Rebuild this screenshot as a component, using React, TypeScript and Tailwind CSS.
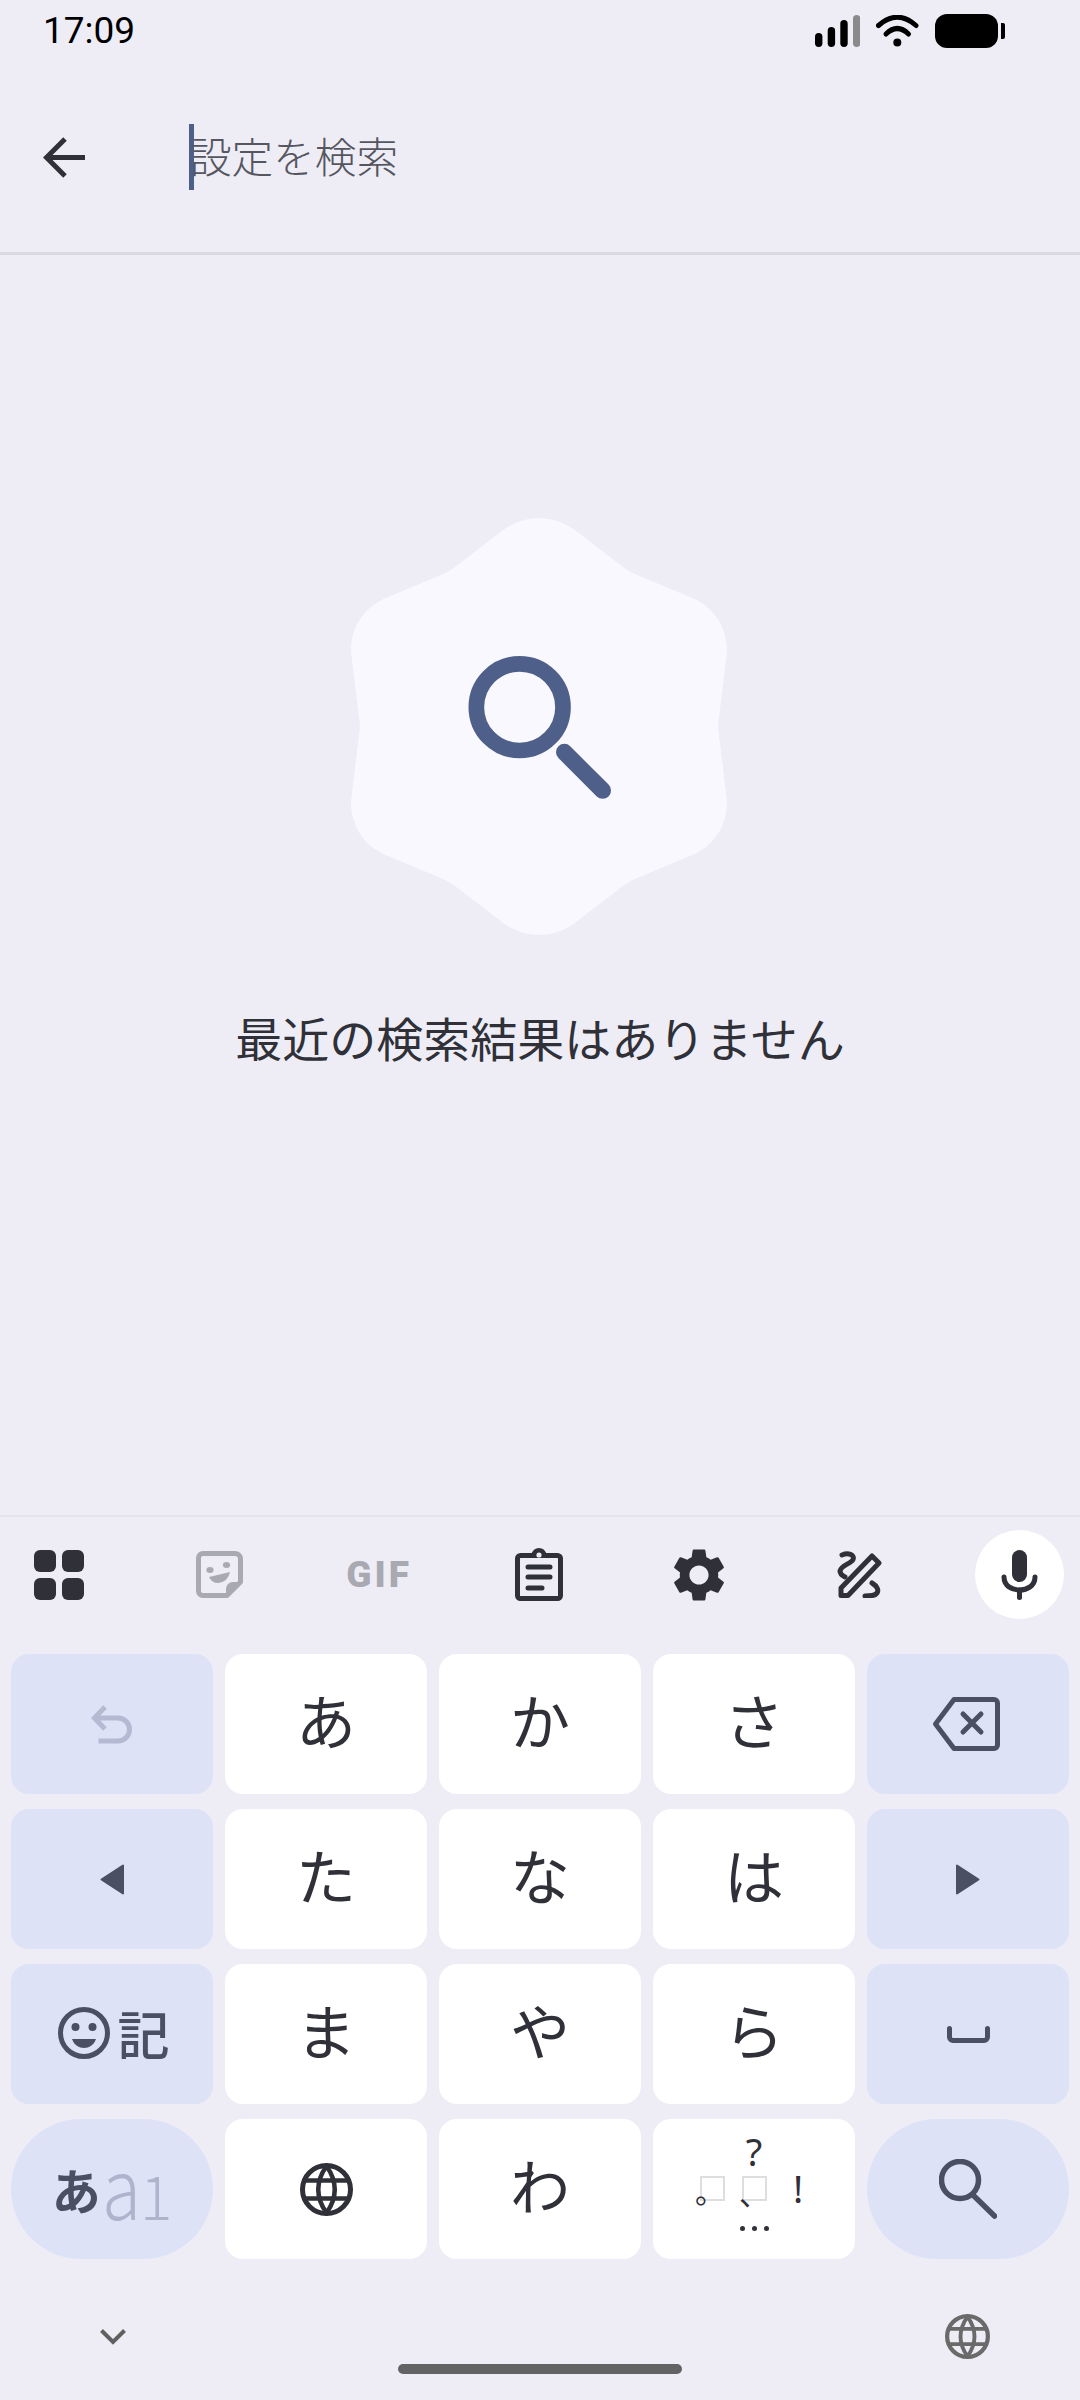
import type { ReactNode } from "react";

const cjk = "font-['Noto_Sans_CJK_JP','Noto_Sans',sans-serif]";

function Signal() {
  return (
    <svg width="45" height="32" viewBox="0 0 45 32">
      <rect x="0" y="18" width="7.4" height="14" rx="3.7" fill="#000" />
      <rect x="12.7" y="12" width="7.4" height="20" rx="3.7" fill="#000" />
      <rect x="25.3" y="5" width="7.4" height="27" rx="3.7" fill="#000" />
      <rect x="38" y="0" width="7.4" height="32" rx="3.7" fill="#8a8a8a" />
    </svg>
  );
}

function Wifi() {
  return (
    <svg width="43" height="32" viewBox="0 0 43 32" fill="none" stroke="#000" strokeWidth="5" strokeLinecap="round">
      <path d="M2.5 10.5Q21.3 -6 40 10.5" />
      <path d="M10 19Q21.3 8 32.5 19" />
      <circle cx="21.3" cy="27.5" r="4" fill="#000" stroke="none" />
    </svg>
  );
}

function Battery() {
  return (
    <svg width="70" height="34" viewBox="0 0 70 34">
      <rect x="0" y="0" width="63" height="34" rx="12" fill="#000" />
      <path d="M66 9h2a2 2 0 0 1 2 2v12a2 2 0 0 1-2 2h-2z" fill="#000" />
    </svg>
  );
}

function BackArrow() {
  return (
    <svg width="42" height="41" viewBox="0 0 42 41" fill="none" stroke="#2f3038" strokeWidth="5">
      <path d="M42 20.5H4" />
      <path d="M22 2L3.5 20.5L22 39" />
    </svg>
  );
}

function EmptyBadge() {
  return (
    <svg width="376" height="417" viewBox="92 85 1128 1250">
      <path
        fill="#faf8ff"
        d="M656 85C695 85 730 97 762 120L895 222C910 234 925 245 945 253L1110 322C1180 350 1220 410 1220 485L1195 690Q1192 710 1195 730L1220 935C1220 1010 1180 1070 1110 1098L945 1167C925 1175 910 1186 895 1198L762 1300C730 1323 695 1335 656 1335C617 1335 582 1323 550 1300L417 1198C402 1186 387 1175 367 1167L202 1098C132 1070 92 1010 92 935L117 730Q120 710 117 690L92 485C92 410 132 350 202 322L367 253C387 245 402 234 417 222L550 120C582 97 617 85 656 85Z"
      />
      <circle cx="598" cy="652" r="130" fill="none" stroke="#4e6089" strokeWidth="47" />
      <path d="M732 787L847 902" stroke="#4e6089" strokeWidth="50" strokeLinecap="round" />
    </svg>
  );
}

function GridIcon() {
  return (
    <svg width="50" height="50" viewBox="0 0 50 50" fill="#2f3038">
      <rect x="0" y="0" width="22" height="22" rx="6" />
      <rect x="28" y="0" width="22" height="22" rx="6" />
      <rect x="0" y="28" width="22" height="22" rx="6" />
      <rect x="28" y="28" width="22" height="22" rx="6" />
    </svg>
  );
}

function StickerIcon() {
  return (
    <svg width="47" height="47" viewBox="0 0 47 47" fill="none">
      <path d="M7 2.5H39a5.5 5.5 0 0 1 5.5 5.5V31L31 44.5H7a4.5 4.5 0 0 1-4.5-4.5V7A4.5 4.5 0 0 1 7 2.5Z" stroke="#a9a9b2" strokeWidth="5" strokeLinejoin="round" />
      <path d="M44 31H37a7 7 0 0 0-7 7V44Z" fill="#a9a9b2" />
      <ellipse cx="14" cy="19" rx="3.6" ry="3" fill="#a9a9b2" />
      <ellipse cx="30.5" cy="14" rx="3.6" ry="3" fill="#a9a9b2" />
      <path d="M13 26L34 21Q32 31 22 32Q16 32 13 26Z" fill="#a9a9b2" />
    </svg>
  );
}

function ClipboardIcon() {
  return (
    <svg width="48" height="53" viewBox="0 0 48 53" fill="none">
      <rect x="2.5" y="7.5" width="43" height="43" rx="3" stroke="#2f3038" strokeWidth="5" />
      <path d="M14 10C16 10 16 0 24 0S32 10 34 10Z" fill="#2f3038" />
      <circle cx="24" cy="7" r="2.6" fill="#eeedf6" />
      <path d="M13 19H35M13 29H35M13 40H27" stroke="#2f3038" strokeWidth="5" strokeLinecap="round" />
    </svg>
  );
}

function GearIcon() {
  return (
    <svg width="64" height="64" viewBox="0 0 24 24" fill="#2f3038">
      <path d="M19.14 12.94c.04-.3.06-.61.06-.94 0-.32-.02-.64-.07-.94l2.03-1.58c.18-.14.23-.41.12-.61l-1.92-3.32c-.12-.22-.37-.29-.59-.22l-2.39.96c-.5-.38-1.03-.7-1.62-.94l-.36-2.54c-.04-.24-.24-.41-.48-.41h-3.84c-.24 0-.43.17-.47.41l-.36 2.54c-.59.24-1.13.57-1.62.94l-2.39-.96c-.22-.08-.47 0-.59.22L2.74 8.87c-.12.21-.08.47.12.61l2.03 1.58c-.05.3-.09.63-.09.94s.02.64.07.94l-2.03 1.58c-.18.14-.23.41-.12.61l1.92 3.32c.12.22.37.29.59.22l2.39-.96c.5.38 1.03.7 1.62.94l.36 2.54c.05.24.24.41.48.41h3.84c.24 0 .44-.17.47-.41l.36-2.54c.59-.24 1.13-.56 1.62-.94l2.39.96c.22.08.47 0 .59-.22l1.92-3.32c.12-.22.07-.47-.12-.61l-2.01-1.58zM12 15.6c-1.98 0-3.6-1.62-3.6-3.6s1.62-3.6 3.6-3.6 3.6 1.62 3.6 3.6-1.62 3.6-3.6 3.6z" />
    </svg>
  );
}

function PenIcon() {
  return (
    <svg width="46" height="47" viewBox="0 0 46 47" fill="none" stroke="#2f3038" strokeWidth="5" strokeLinecap="round" strokeLinejoin="round">
      <path d="M5 44.5V37L36 5L43 12L12 44.5Z" />
      <path d="M6 4C12 1.5 19 3.5 17 8.5C15 13 5 14 4 20C4 23 7 25 9 26" />
      <path d="M36 32C41 35 43 39 41 42C39 45 34 45 29 45" />
    </svg>
  );
}

function MicIcon() {
  return (
    <svg width="37" height="50" viewBox="0 0 37 50" fill="none" stroke="#2f3038" strokeLinecap="round">
      <rect x="11" y="0" width="15" height="32" rx="7.5" fill="#2f3038" stroke="none" />
      <path d="M3 27C3 36 11 40 18.5 40C26 40 34 36 34 27" strokeWidth="5" />
      <path d="M18.5 40V47.5" strokeWidth="5" />
    </svg>
  );
}

function UndoIcon() {
  return (
    <svg width="42" height="39" viewBox="0 0 42 39" fill="none" stroke="#b4bad2" strokeWidth="5">
      <path d="M14 2L3.5 13L14 24" />
      <path d="M3.5 13H27a11.5 11.5 0 0 1 0 23H7.5" />
    </svg>
  );
}

function LeftTriangle() {
  return (
    <svg width="24" height="31" viewBox="0 0 24 31" fill="#4a4f63" stroke="#4a4f63" strokeWidth="2" strokeLinejoin="round">
      <path d="M23 1.5V29.5L1.5 15.5Z" />
    </svg>
  );
}

function RightTriangle() {
  return (
    <svg width="24" height="31" viewBox="0 0 24 31" fill="#4a4f63" stroke="#4a4f63" strokeWidth="2" strokeLinejoin="round">
      <path d="M1 1.5V29.5L22.5 15.5Z" />
    </svg>
  );
}

function BackspaceIcon() {
  return (
    <svg width="68" height="54" viewBox="0 0 68 54" fill="none" stroke="#4a4f63" strokeWidth="5" strokeLinejoin="round" strokeLinecap="round">
      <path d="M22 2.5H62a3.5 3.5 0 0 1 3.5 3.5V48a3.5 3.5 0 0 1-3.5 3.5H22L3.5 27Z" />
      <path d="M31 17L49 35M49 17L31 35" />
    </svg>
  );
}

function SpaceIcon() {
  return (
    <svg width="43" height="17" viewBox="0 0 43 17" fill="none" stroke="#4a4f63" strokeWidth="5" strokeLinecap="round">
      <path d="M2.5 2.5V11a3.5 3.5 0 0 0 3.5 3.5H37a3.5 3.5 0 0 0 3.5-3.5V2.5" />
    </svg>
  );
}

function SmileyIcon() {
  return (
    <svg width="52" height="52" viewBox="0 0 52 52" fill="none">
      <circle cx="26" cy="26" r="23.5" stroke="#4a4f63" strokeWidth="5" />
      <circle cx="17.5" cy="20" r="4" fill="#4a4f63" />
      <circle cx="34.5" cy="20" r="4" fill="#4a4f63" />
      <path d="M14 32H38C36 38 31 41 26 41S16 38 14 32Z" fill="#4a4f63" />
    </svg>
  );
}

function GlobeIcon({ size, color }: { size: number; color: string }) {
  return (
    <svg width={size} height={size} viewBox="0 0 53 53" fill="none" stroke={color} strokeWidth="5">
      <circle cx="26.5" cy="26.5" r="24" />
      <path d="M3 17.5H50M3 35.5H50" strokeWidth="4.5" />
      <path d="M26.5 3Q10 26.5 26.5 50Q43 26.5 26.5 3Z" strokeWidth="4.5" />
    </svg>
  );
}

function SearchKeyIcon() {
  return (
    <svg width="58" height="60" viewBox="0 0 58 60" fill="none" stroke="#4a4f63" strokeWidth="5.5" strokeLinecap="round">
      <circle cx="21" cy="21" r="18.5" />
      <path d="M34 36L55.5 57" />
    </svg>
  );
}

function Chevron() {
  return (
    <svg width="26" height="16" viewBox="0 0 26 16" fill="none" stroke="#606060" strokeWidth="4">
      <path d="M1.5 1.5L13 13L24.5 1.5" />
    </svg>
  );
}

function Key({ children, fn, pill }: { children: ReactNode; fn?: boolean; pill?: boolean }) {
  return (
    <div
      className={`flex h-[140px] w-[202px] items-center justify-center ${pill ? "rounded-[70px]" : "rounded-[18px]"} ${fn ? "bg-[#dde2f7]" : "bg-white"}`}
    >
      {children}
    </div>
  );
}

function Kana({ children }: { children: string }) {
  return <span className={`${cjk} pb-[10px] text-[60px] leading-none text-[#2f3038]`}>{children}</span>;
}

function TofuMark({ mark, markClass }: { mark: string; markClass: string }) {
  return (
    <span className="relative block h-[25px] w-[25px] border-2 border-[#dedede]">
      <span className={`${cjk} absolute text-[30px] leading-none text-[#2f3038] ${markClass}`}>{mark}</span>
    </span>
  );
}

function PunctuationKey() {
  return (
    <Key>
      <div className="flex h-full w-full flex-col items-center pt-[13px]">
        <span className="font-['Noto_Sans',sans-serif] text-[38px] leading-[38px] text-[#2f3038]">?</span>
        <div className="mr-[5px] mt-[3px] flex items-center">
          <TofuMark mark="。" markClass="left-[-7px] top-[-3px]" />
          <span className="w-[17px]" />
          <TofuMark mark="、" markClass="left-[-5px] top-[-1px]" />
          <span className="ml-[26px] font-['Noto_Sans',sans-serif] text-[38px] leading-[30px] text-[#2f3038]">!</span>
        </div>
        <div className="mt-[23px] flex gap-[7px]">
          <span className="h-[5px] w-[5px] rounded-full bg-[#2f3038]" />
          <span className="h-[5px] w-[5px] rounded-full bg-[#2f3038]" />
          <span className="h-[5px] w-[5px] rounded-full bg-[#2f3038]" />
        </div>
      </div>
    </Key>
  );
}

export default function App() {
  return (
    <div className={`${cjk} flex h-[2400px] w-[1080px] flex-col overflow-hidden bg-[#eeedf6]`}>
      {/* Status bar */}
      <div className="flex h-[62px] items-start justify-between pl-[43px] pr-[75px] pt-[14px]">
        <span className="font-['Roboto',sans-serif] text-[37px] leading-[33px] text-black">17:09</span>
        <div className="flex items-start">
          <span className="mt-[1px]"><Signal /></span>
          <span className="ml-[16px] mt-[1px]"><Wifi /></span>
          <span className="ml-[16px]"><Battery /></span>
        </div>
      </div>

      {/* Search header */}
      <div className="flex h-[190px] items-center pl-[43px]">
        <BackArrow />
        <span className="ml-[104px] h-[66px] w-[5px] bg-[#4e6089]" />
        <span className="ml-[-4px] mt-[-2px] text-[41.6px] font-light leading-none text-[#55565f]">設定を検索</span>
      </div>
      <div className="h-[3px] bg-[#d9d9e3]" />

      {/* Empty state */}
      <div className="flex flex-1 flex-col items-center pt-[263px]">
        <div className="mr-[2px]"><EmptyBadge /></div>
        <p className="mt-[72px] text-[47px] leading-[60px] text-[#2f3038]">最近の検索結果はありません</p>
      </div>

      {/* Keyboard */}
      <div className="border-t-2 border-[#e5e4ee] pb-[26px]">
        <div className="mt-[13px] flex h-[89px] items-center justify-between pl-[11px] pr-[12.5px]">
          <div className="flex w-[96px] justify-center"><GridIcon /></div>
          <div className="flex w-[96px] justify-center"><StickerIcon /></div>
          <div className="flex w-[96px] justify-center">
            <span className="font-['Roboto',sans-serif] text-[37px] font-black leading-none tracking-[3px] text-[#a9a9b2]">GIF</span>
          </div>
          <div className="flex w-[96px] justify-center"><ClipboardIcon /></div>
          <div className="flex w-[96px] justify-center"><GearIcon /></div>
          <div className="flex w-[96px] justify-center"><PenIcon /></div>
          <div className="flex w-[96px] justify-center">
            <div className="flex h-[89px] w-[89px] items-center justify-center rounded-full bg-white"><MicIcon /></div>
          </div>
        </div>

        <div className="mt-[35px] flex flex-col gap-[15px] px-[11px]">
          <div className="flex justify-between">
            <Key fn><UndoIcon /></Key>
            <Key><Kana>あ</Kana></Key>
            <Key><Kana>か</Kana></Key>
            <Key><Kana>さ</Kana></Key>
            <Key fn><div className="mr-[4px]"><BackspaceIcon /></div></Key>
          </div>
          <div className="flex justify-between">
            <Key fn><LeftTriangle /></Key>
            <Key><Kana>た</Kana></Key>
            <Key><Kana>な</Kana></Key>
            <Key><Kana>は</Kana></Key>
            <Key fn><RightTriangle /></Key>
          </div>
          <div className="flex justify-between">
            <Key fn>
              <div className="flex items-center gap-[7px] pb-[2px] pl-[4px]">
                <SmileyIcon />
                <span className="text-[52px] font-medium leading-none text-[#4a4f63]">記</span>
              </div>
            </Key>
            <Key><Kana>ま</Kana></Key>
            <Key><Kana>や</Kana></Key>
            <Key><Kana>ら</Kana></Key>
            <Key fn><SpaceIcon /></Key>
          </div>
          <div className="flex justify-between">
            <Key fn pill>
              <div className="flex items-baseline">
                <span className="-translate-y-[10px] text-[49px] font-bold leading-none text-[#4a4f63]">あ</span>
                <span className="ml-[1px] inline-block w-[38px] origin-left scale-x-[0.85] text-[84px] font-light leading-[60px] text-[#aeb4cc]">a</span>
                <span className="text-[61px] font-light leading-none text-[#aeb4cc]">1</span>
              </div>
            </Key>
            <Key><GlobeIcon size={53} color="#2f3038" /></Key>
            <Key><Kana>わ</Kana></Key>
            <PunctuationKey />
            <Key fn pill><SearchKeyIcon /></Key>
          </div>
        </div>

        {/* Nav area */}
        <div className="flex items-center justify-between pl-[100px] pr-[90px] pt-[55px]">
          <Chevron />
          <GlobeIcon size={45} color="#6a6a6a" />
        </div>
        <div className="mx-auto mt-[5px] h-[10px] w-[284px] rounded-full bg-[#636366]" />
      </div>
    </div>
  );
}
